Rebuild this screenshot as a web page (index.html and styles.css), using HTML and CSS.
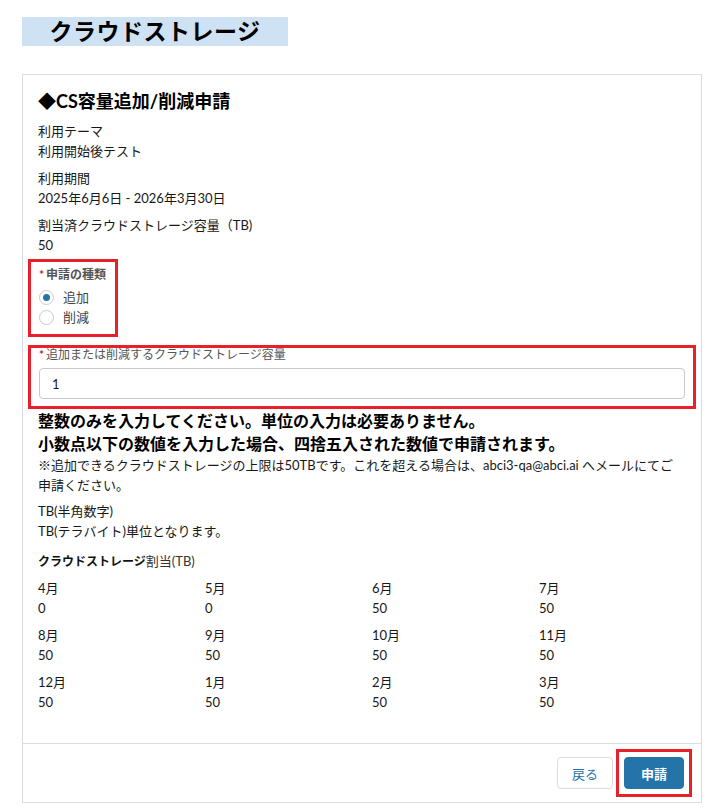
FILE: index.html
```html
<!DOCTYPE html>
<html lang="ja">
<head>
  <meta charset="UTF-8" />
  <title>クラウドストレージ</title>
  <link rel="stylesheet" href="styles.css">
</head>
<body>

<div class="banner">クラウドストレージ</div>

<div class="card">
  <div class="card-body">
    <h1>◆CS容量追加/削減申請</h1>

    <div class="field">
      <div>利用テーマ</div>
      <div>利用開始後テスト</div>
    </div>
    <div class="field">
      <div>利用期間</div>
      <div>2025年6月6日 - 2026年3月30日</div>
    </div>
    <div class="field">
      <div>割当済クラウドストレージ容量（TB)</div>
      <div>50</div>
    </div>

    <div class="mark mark-type">
      <div class="label"><span class="req">*</span>申請の種類</div>
      <label class="radio"><span class="dot checked"></span>追加</label>
      <label class="radio"><span class="dot"></span>削減</label>
    </div>

    <div class="mark mark-amount">
      <div class="label light"><span class="req">*</span>追加または削減するクラウドストレージ容量</div>
      <input type="text" class="amount" value="1">
    </div>

    <p class="notice">整数のみを入力してください。単位の入力は必要ありません。<br>小数点以下の数値を入力した場合、四捨五入された数値で申請されます。</p>
    <p class="note">※追加できるクラウドストレージの上限は50TBです。これを超える場合は、abci3-qa@abci.ai へメールにてご申請ください。</p>

    <div class="field unit">
      <div>TB(半角数字)</div>
      <div>TB(テラバイト)単位となります。</div>
    </div>

    <div class="alloc-title">クラウドストレージ<span class="thin">割当(TB)</span></div>
    <div class="alloc">
      <div><div>4月</div><div>0</div></div>
      <div><div>5月</div><div>0</div></div>
      <div><div>6月</div><div>50</div></div>
      <div><div>7月</div><div>50</div></div>
      <div><div>8月</div><div>50</div></div>
      <div><div>9月</div><div>50</div></div>
      <div><div>10月</div><div>50</div></div>
      <div><div>11月</div><div>50</div></div>
      <div><div>12月</div><div>50</div></div>
      <div><div>1月</div><div>50</div></div>
      <div><div>2月</div><div>50</div></div>
      <div><div>3月</div><div>50</div></div>
    </div>
  </div>

  <div class="card-footer">
    <button class="btn">戻る</button>
    <div class="mark mark-btn">
      <button class="btn btn-primary">申請</button>
    </div>
  </div>
</div>

</body>
</html>
```

FILE: styles.css
```css
body {
  margin: 0;
  padding: 17px 16px 0 22px;
  font-family: 'Lato', 'Noto Sans CJK JP', sans-serif;
  font-size: 13px;
  line-height: 20px;
  color: #181818;
  background: #fff;
}

.banner {
  width: 266px;
  height: 29px;
  background: #cfe2f3;
  font-size: 23px;
  font-weight: bold;
  line-height: 29px;
  text-align: center;
  letter-spacing: 0.5px;
  color: #000;
}

.card {
  margin-top: 28px;
  border: 1px solid #dcdcdc;
  width: 678px;
}

.card-body {
  padding: 13px 15px 31px 15px;
}

h1 {
  margin: 0 0 7px;
  font-size: 18px;
  line-height: 26px;
  font-weight: bold;
  color: #000;
}

.field {
  margin-bottom: 7px;
}

.mark {
  border: 3px solid #e8202a;
}

.mark-type {
  width: 76px;
  margin: -3px 0 0 -10px;
  padding: 4px 0 7px 8px;
}

.mark-amount {
  margin: 8px -10px 0 -10px;
  padding: 0 8px 7px 8px;
}

.label {
  font-size: 12px;
  font-weight: bold;
  line-height: 18px;
  color: #555;
  margin-bottom: 3px;
}

.label.light {
  font-weight: normal;
  line-height: 14px;
  margin-bottom: 6px;
}

.req {
  color: #e0101a;
  font-size: 12px;
  font-weight: bold;
  margin-right: 2px;
}

.radio {
  display: flex;
  align-items: center;
  height: 20px;
  color: #444;
}

.dot {
  width: 13px;
  height: 13px;
  border: 1px solid #c9c9c9;
  border-radius: 50%;
  margin-right: 9px;
  position: relative;
  background: #fff;
}

.dot.checked::after {
  content: "";
  position: absolute;
  left: 3px;
  top: 3px;
  width: 7px;
  height: 7px;
  border-radius: 50%;
  background: #2574a9;
}

.amount {
  display: block;
  box-sizing: border-box;
  width: 100%;
  height: 31px;
  border: 1px solid #c9c9c9;
  border-radius: 4px;
  padding: 0 12px;
  font-family: 'Lato', 'Noto Sans CJK JP', sans-serif;
  font-size: 13px;
  color: #181818;
  outline: none;
}

.notice {
  margin: 0;
  font-size: 16px;
  line-height: 23px;
  font-weight: bold;
  color: #000;
}

.note {
  margin: 0 0 6px;
}

.alloc-title {
  font-size: 12px;
  font-weight: bold;
  line-height: 18px;
  color: #111;
  margin: 11px 0 7px;
}

.alloc-title .thin {
  font-weight: normal;
  font-size: 13px;
  color: #333;
}

.alloc {
  display: grid;
  grid-template-columns: repeat(4, 167px);
  row-gap: 7px;
  line-height: 20px;
}

.card-footer {
  border-top: 1px solid #dcdcdc;
  display: flex;
  justify-content: flex-end;
  align-items: center;
  gap: 11px;
  padding: 13px 17px 13px 0;
}

.btn {
  height: 32px;
  padding: 0 14px;
  border: 1px solid #dcdcdc;
  border-radius: 4px;
  background: #fff;
  color: #2574a9;
  font-family: 'Lato', 'Noto Sans CJK JP', sans-serif;
  font-size: 13px;
}

.btn-primary {
  background: #2574a9;
  border-color: #2574a9;
  color: #fff;
  font-weight: bold;
  padding: 0 16px;
}

.mark-btn {
  margin: -8px;
  padding: 5px;
}
```
